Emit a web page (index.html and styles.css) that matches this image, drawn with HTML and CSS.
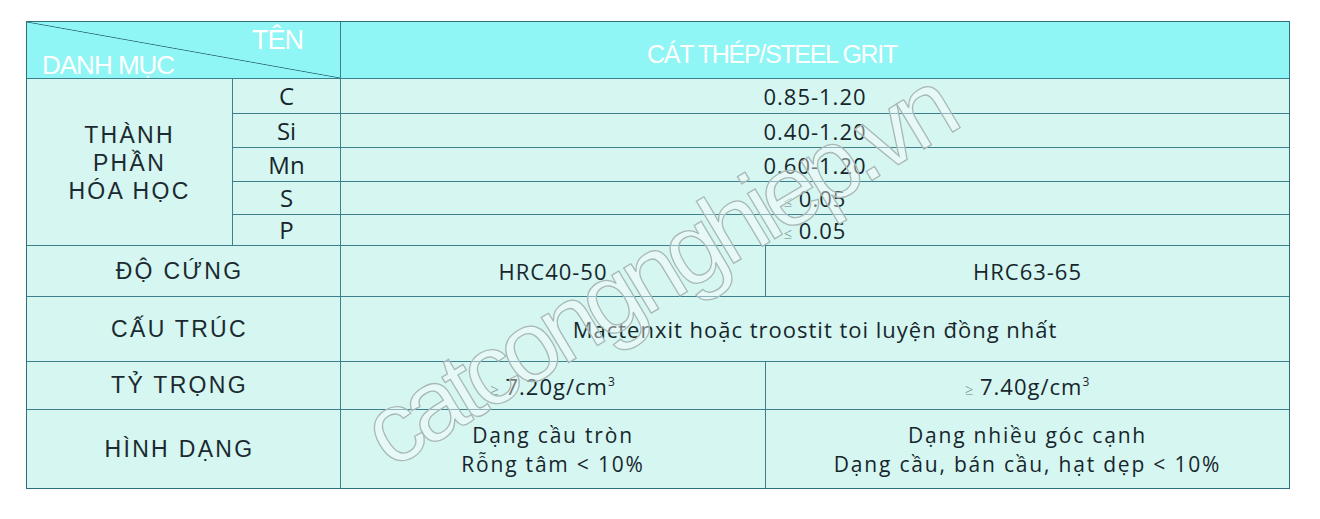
FILE: index.html
```html
<!DOCTYPE html>
<html lang="vi">
<head>
<meta charset="utf-8">
<title>Cát thép</title>
<link rel="stylesheet" href="styles.css">
</head>
<body>
<div class="wrap">
  <div class="spec">
    <div class="hd hd-corner">
      <span class="hd-ten">TÊN</span>
      <span class="hd-dm">DANH MỤC</span>
    </div>
    <div class="hd hd-title"><span>CÁT THÉP/STEEL GRIT</span></div>

    <div class="cell label chem"><span>THÀNH<br>PHẦN<br>HÓA HỌC</span></div>
    <div class="cell el"><span>C</span></div><div class="cell val wide"><span>0.85-1.20</span></div>
    <div class="cell el"><span>Si</span></div><div class="cell val wide"><span>0.40-1.20</span></div>
    <div class="cell el"><span>Mn</span></div><div class="cell val wide"><span>0.60-1.20</span></div>
    <div class="cell el"><span>S</span></div><div class="cell val wide"><span><span class="sym">≤</span> 0.05</span></div>
    <div class="cell el"><span>P</span></div><div class="cell val wide"><span><span class="sym">≤</span> 0.05</span></div>

    <div class="cell label span2"><span>ĐỘ CỨNG</span></div>
    <div class="cell val"><span>HRC40-50</span></div>
    <div class="cell val"><span>HRC63-65</span></div>

    <div class="cell label span2"><span>CẤU TRÚC</span></div>
    <div class="cell txt wide"><span>Mactenxit hoặc troostit toi luyện đồng nhất</span></div>

    <div class="cell label span2"><span>TỶ TRỌNG</span></div>
    <div class="cell txt"><span><span class="sym">≥</span> 7.20g/cm<sup>3</sup></span></div>
    <div class="cell txt"><span><span class="sym">≥</span> 7.40g/cm<sup>3</sup></span></div>

    <div class="cell label span2"><span>HÌNH DẠNG</span></div>
    <div class="cell txt two"><span>Dạng cầu tròn<br>Rỗng tâm &lt; 10%</span></div>
    <div class="cell txt two"><span>Dạng nhiều góc cạnh<br>Dạng cầu, bán cầu, hạt dẹp &lt; 10%</span></div>
  </div>
  <div class="watermark">catcongnghiep.vn</div>
</div>
</body>
</html>
```

FILE: styles.css
```css
html, body {
  margin: 0;
  padding: 0;
  background: #ffffff;
}

.wrap {
  position: relative;
  width: 1320px;
  height: 519px;
  padding: 21px 0 0 26px;
  box-sizing: border-box;
  overflow: hidden;
}

.spec {
  width: 1264px;
  height: 468px;
  box-sizing: border-box;
  display: grid;
  grid-template-columns: 205px 107px 424px 523px;
  grid-template-rows: 56px 34px 33px 33px 32px 30px 50px 64px 47px 78px;
  gap: 1px;
  border: 1px solid #2f6e7c;
  background: #3c7f8d;
  color: #17262c;
}

.hd {
  background: #8ff5f5;
  color: #ffffff;
  font-family: "Liberation Sans", Arial, sans-serif;
  font-size: 25px;
  letter-spacing: -1.3px;
}

.hd-corner {
  grid-column: 1 / 3;
  display: flex;
  flex-direction: column;
  justify-content: space-between;
  background:
    linear-gradient(to top right, transparent calc(50% - 0.8px), #2f6f7d 50%, transparent calc(50% + 0.8px)),
    #8ff5f5;
  padding: 6px 0 3px 0;
  box-sizing: border-box;
}

.hd-ten {
  align-self: flex-end;
  padding-right: 37px;
  font-size: 27px;
  letter-spacing: -1px;
  line-height: 24px;
}

.hd-dm {
  align-self: flex-start;
  padding-left: 15px;
  font-size: 26px;
  letter-spacing: -1px;
  line-height: 26px;
}

.hd-title {
  grid-column: 3 / 5;
  display: flex;
  align-items: center;
  justify-content: center;
  padding: 8px 86px 0 0;
}

.cell {
  background: #d5f6f1;
  display: flex;
  align-items: center;
  justify-content: center;
  text-align: center;
}

.label {
  font-family: "Liberation Sans", Arial, sans-serif;
  font-size: 23px;
  letter-spacing: 2.3px;
  color: #1b2a30;
}

.span2 {
  grid-column: 1 / 3;
  padding-right: 8px;
}

.chem {
  grid-column: 1;
  grid-row: 2 / 7;
  line-height: 28px;
  padding: 2px 0 0 0;
}

.el {
  font-family: "Open Sans", "Noto Sans", sans-serif;
  font-size: 24px;
  line-height: 1;
}

.val {
  font-family: "Open Sans", "Noto Sans", sans-serif;
  font-size: 22px;
  line-height: 1;
  letter-spacing: 1px;
}

.wide {
  grid-column: 3 / 5;
}

.txt {
  font-family: "Open Sans", "Noto Sans", sans-serif;
  font-size: 22px;
  letter-spacing: 1px;
  line-height: 1;
}

.two {
  font-size: 21px;
  letter-spacing: 1.8px;
  line-height: 29px;
  padding-top: 1px;
}

.sym {
  font-size: 15px;
  color: #6b7d80;
  font-weight: 300;
  letter-spacing: 0;
}

sup {
  font-size: 12px;
  vertical-align: 9px;
  line-height: 0;
}

.watermark {
  position: absolute;
  left: 372px;
  top: 390px;
  transform-origin: 0 50%;
  transform: rotate(-31deg);
  font-family: "Liberation Sans", Arial, sans-serif;
  font-size: 100px;
  letter-spacing: -7.5px;
  line-height: 1;
  color: rgba(255, 255, 255, 0.4);
  -webkit-text-stroke: 1.3px #a8b8b7;
  white-space: nowrap;
  pointer-events: none;
}
```
